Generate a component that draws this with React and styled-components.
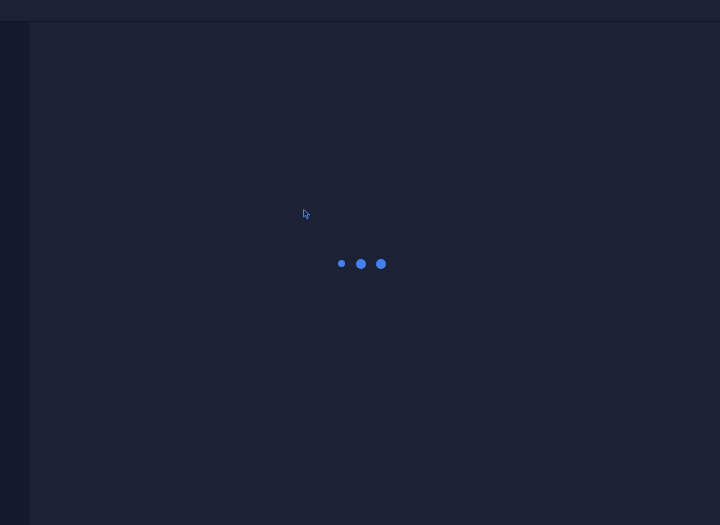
import React from "react";
import styled, { createGlobalStyle } from "styled-components";

const GlobalStyle = createGlobalStyle`
  html, body {
    margin: 0;
    padding: 0;
    height: 100%;
    background: #1b2034;
    font-family: Inter, "Noto Sans", sans-serif;
  }
  #root {
    height: 100%;
  }
`;

const Shell = styled.div`
  width: 720px;
  height: 525px;
  display: flex;
  flex-direction: column;
  background: #1b2034;
  overflow: hidden;
`;

const TopBar = styled.header`
  height: 21px;
  flex-shrink: 0;
  background: #1c2136;
  border-bottom: 1px solid #131829;
`;

const Body = styled.div`
  flex: 1;
  display: flex;
  min-height: 0;
`;

const Sidebar = styled.aside`
  width: 29px;
  flex-shrink: 0;
  background: #131a2c;
`;

const Main = styled.main`
  flex: 1;
  display: flex;
  justify-content: center;
  align-items: center;
  background: #1c2136;
  border-left: 1px solid #181d30;
  position: relative;
`;

const Loader = styled.div`
  display: flex;
  align-items: center;
  gap: 10px;
  margin: 0 27px 20px 0;
`;

const Dot = styled.span`
  width: ${(props) => props.size}px;
  height: ${(props) => props.size}px;
  border-radius: 50%;
  background: #4580f0;
  margin-right: ${(props) => props.shift || 0}px;
`;

const Pointer = styled.svg`
  position: absolute;
  left: 273px;
  top: 187px;
`;

const App = () => {
  return (
    <>
      <GlobalStyle />
      <Shell>
        <TopBar />
        <Body>
          <Sidebar />
          <Main>
            <Pointer width="8" height="11" viewBox="0 0 8 11">
              <path
                d="M0.5 0.5 L0.5 8 L2.5 6.3 L4 9.8 L5.4 9.2 L4 5.8 L6.8 5.8 Z"
                fill="#1c2136"
                stroke="#4a7ff0"
                strokeWidth="1"
              />
            </Pointer>
            <Loader>
              <Dot size={7} shift={1} />
              <Dot size={10} />
              <Dot size={10} />
            </Loader>
          </Main>
        </Body>
      </Shell>
    </>
  );
};

export default App;
